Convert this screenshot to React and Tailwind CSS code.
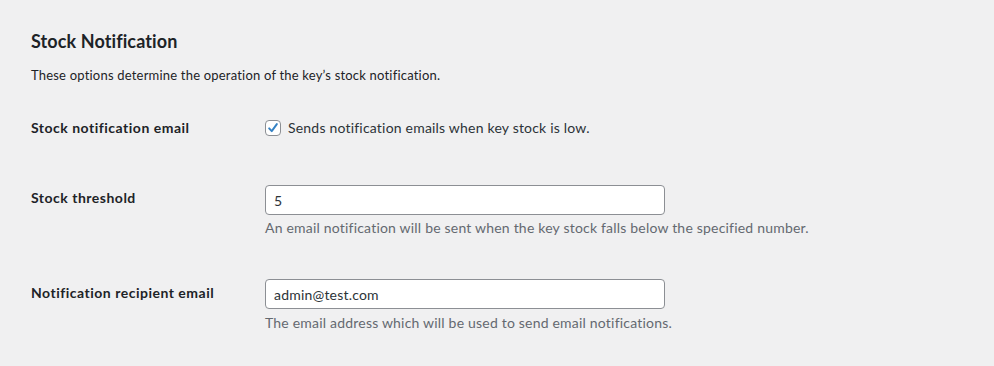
export default function App() {
  const font = { fontFamily: 'Lato, "Noto Sans", sans-serif' }

  return (
    <div className="min-h-screen bg-[#f0f0f1] pl-[31px] pt-[30px] text-[#1d2327] font-['Lato','Noto_Sans',sans-serif]" style={font}>
      <h2 className="text-[18px] leading-[22px] font-bold tracking-[0.1px]">Stock Notification</h2>
      <p className="mt-[14px] text-[13px] leading-[18px] tracking-[0.2px]">These options determine the operation of the key’s stock notification.</p>

      <div className="mt-[15px]">
        {/* Stock notification email */}
        <div className="flex h-[70px]">
          <div className="w-[234px] pt-[20px] text-[14px] leading-[18px] font-bold tracking-[0.5px]">Stock notification email</div>
          <div className="pt-[20px]">
            <label className="flex items-center gap-[7px] text-[14px] leading-[18px] tracking-[0.2px] text-[#2c3338]">
              <span className="-mt-[1px] flex h-[16px] w-[16px] items-center justify-center rounded-[4px] border border-[#8c8f94] bg-white">
                <svg width="16" height="16" viewBox="0 0 20 20">
                  <path d="M4.5 10.5 L8.2 14.5 L15.5 4.5" fill="none" stroke="#3582c4" strokeWidth="2.8" strokeLinecap="round" strokeLinejoin="round" />
                </svg>
              </span>
              Sends notification emails when key stock is low.
            </label>
          </div>
        </div>

        {/* Stock threshold */}
        <div className="flex h-[95px]">
          <div className="w-[234px] pt-[20px] text-[14px] leading-[18px] font-bold tracking-[0.5px]">Stock threshold</div>
          <div className="pt-[16px]">
            <input
              type="text"
              defaultValue="5"
              className="block h-[30px] w-[400px] rounded-[4px] border border-[#8c8f94] bg-white px-[8px] text-[14px] tracking-[0.2px] text-[#2c3338] outline-none"
            />
            <p className="mt-[4px] text-[14px] leading-[18px] tracking-[0.2px] text-[#646970]">An email notification will be sent when the key stock falls below the specified number.</p>
          </div>
        </div>

        {/* Notification recipient email */}
        <div className="flex h-[95px]">
          <div className="w-[234px] pt-[20px] text-[14px] leading-[18px] font-bold tracking-[0.5px]">Notification recipient email</div>
          <div className="pt-[15px]">
            <input
              type="text"
              defaultValue="admin@test.com"
              className="block h-[30px] w-[400px] rounded-[4px] border border-[#8c8f94] bg-white px-[8px] text-[14px] tracking-[0.2px] text-[#2c3338] outline-none"
            />
            <p className="mt-[5px] text-[14px] leading-[18px] tracking-[0.2px] text-[#646970]">The email address which will be used to send email notifications.</p>
          </div>
        </div>
      </div>
    </div>
  )
}
